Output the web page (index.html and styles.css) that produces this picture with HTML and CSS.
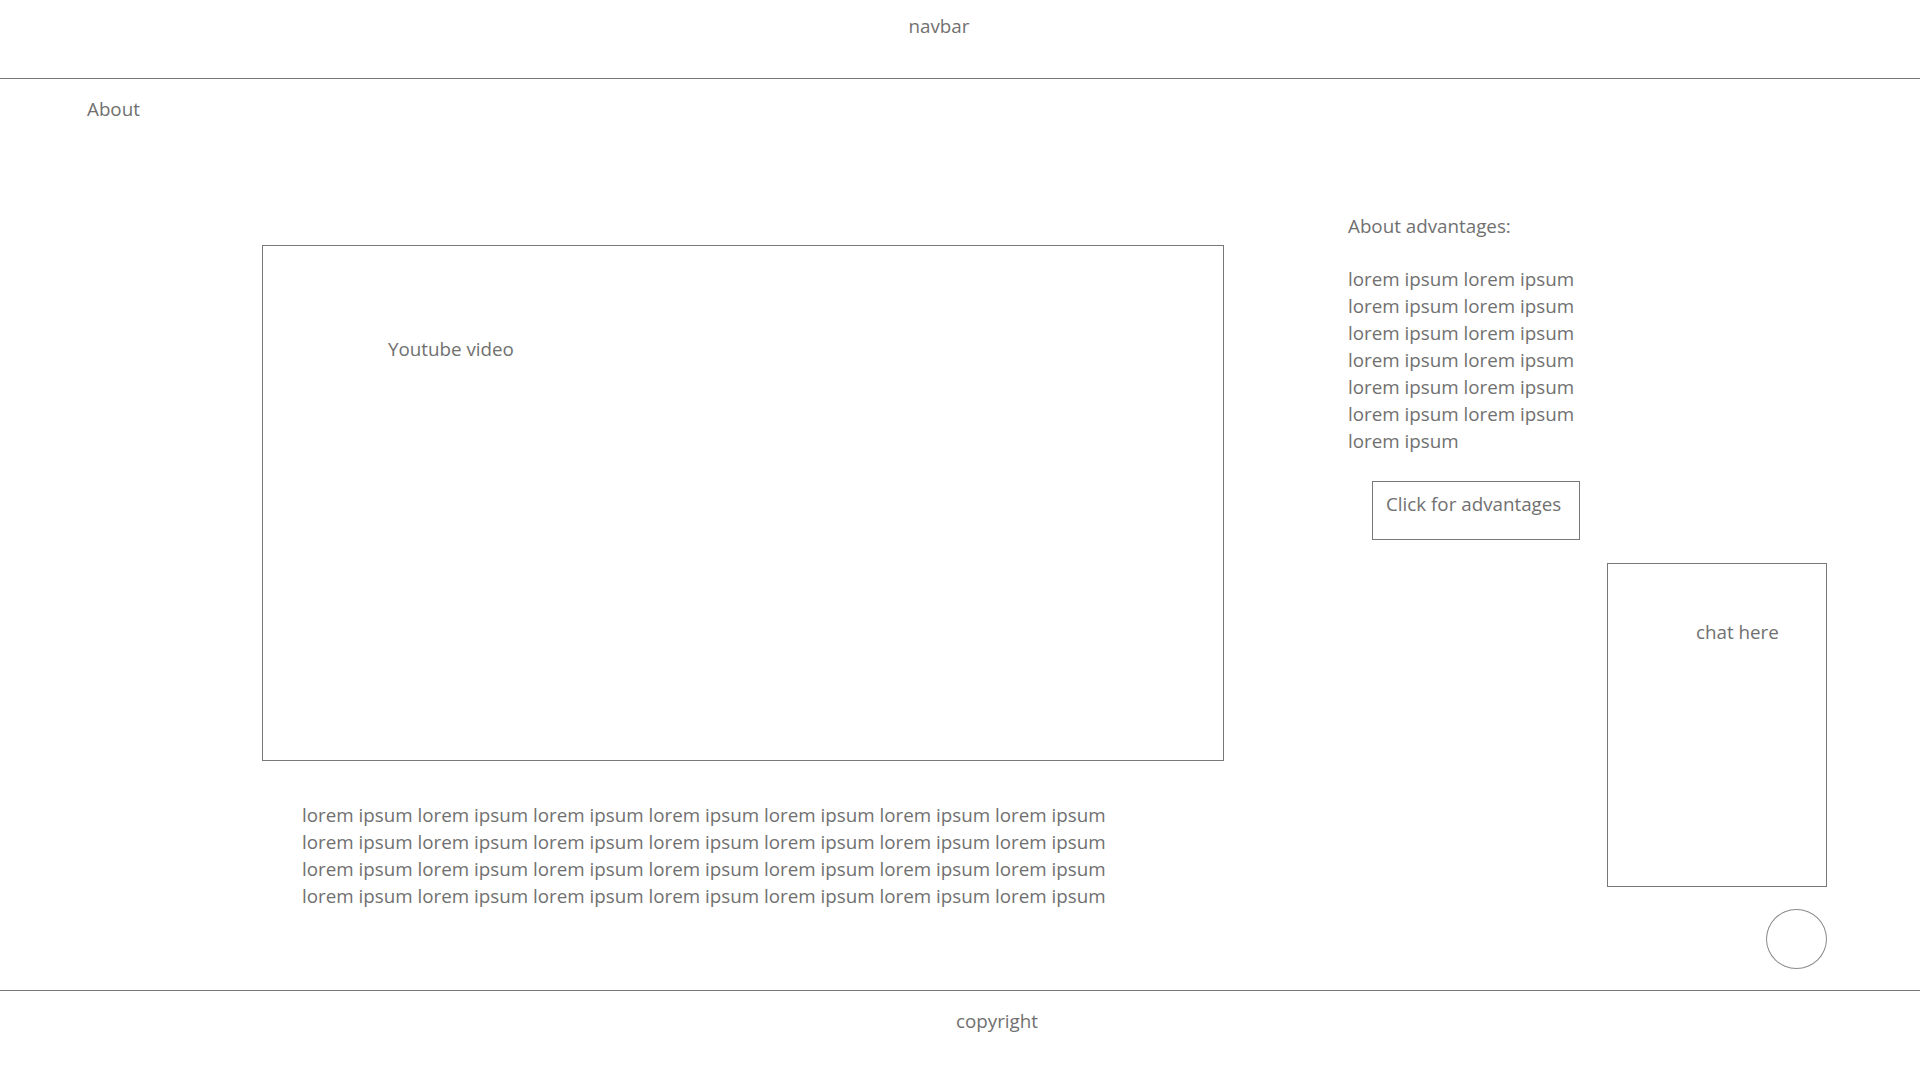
FILE: index.html
```html
<!DOCTYPE html>
<html lang="en">
<head>
<meta charset="utf-8">
<title>About</title>
<link rel="stylesheet" href="styles.css">
</head>
<body>
<header class="navbar"><span>navbar</span></header>
<main class="main">
  <h1 class="page-title">About</h1>
  <div class="content">
    <section class="video-col">
      <div class="video-box"><span class="video-label">Youtube video</span></div>
      <p class="description">lorem ipsum lorem ipsum lorem ipsum lorem ipsum lorem ipsum lorem ipsum lorem ipsum lorem ipsum lorem ipsum lorem ipsum lorem ipsum lorem ipsum lorem ipsum lorem ipsum lorem ipsum lorem ipsum lorem ipsum lorem ipsum lorem ipsum lorem ipsum lorem ipsum lorem ipsum lorem ipsum lorem ipsum lorem ipsum lorem ipsum lorem ipsum lorem ipsum</p>
    </section>
    <aside class="side-col">
      <p class="adv-title">About advantages:</p>
      <p class="adv-text">lorem ipsum lorem ipsum lorem ipsum lorem ipsum lorem ipsum lorem ipsum lorem ipsum lorem ipsum lorem ipsum lorem ipsum lorem ipsum lorem ipsum lorem ipsum</p>
      <button class="adv-button" type="button">Click for advantages</button>
      <div class="chat-box"><span class="chat-label">chat here</span></div>
      <div class="chat-toggle"></div>
    </aside>
  </div>
</main>
<footer class="footer"><span>copyright</span></footer>
</body>
</html>
```

FILE: styles.css
```css
* {
  box-sizing: border-box;
}

html, body {
  margin: 0;
  padding: 0;
  background: #ffffff;
}

body {
  font-family: "Open Sans", "Noto Sans", sans-serif;
  font-size: 18.8px;
  line-height: 27px;
  color: #707070;
  min-height: 100vh;
  display: flex;
  flex-direction: column;
}

.navbar {
  height: 79px;
  padding: 13px 42px 0 0;
  border-bottom: 1px solid #787878;
  display: flex;
  justify-content: center;
  align-items: flex-start;
}

.main {
  flex: 1;
  display: flex;
  flex-direction: column;
  padding-top: 17px;
}

.page-title {
  margin: 0;
  padding-left: 87px;
  font-size: 18.8px;
  font-weight: 400;
  line-height: 27px;
}

.content {
  display: flex;
  align-items: flex-start;
}

.video-col {
  margin-left: 262px;
  margin-top: 122px;
  width: 962px;
}

.video-box {
  width: 962px;
  height: 516px;
  border: 1px solid #787878;
  padding: 90px 0 0 125px;
}

.video-label {
  display: block;
}

.description {
  margin: 41px 0 0 40px;
  width: 840px;
}

.side-col {
  margin-left: 124px;
  margin-top: 90px;
  width: 480px;
  display: flex;
  flex-direction: column;
  align-items: flex-start;
}

.adv-title {
  margin: 0 0 26px 0;
}

.adv-text {
  margin: 0;
  width: 240px;
}

.adv-button {
  margin: 26px 0 0 24px;
  width: 208px;
  height: 59px;
  padding: 9px 0 0 13px;
  border: 1px solid #787878;
  background: #ffffff;
  font-family: inherit;
  font-size: 18.8px;
  line-height: 27px;
  color: #707070;
  text-align: left;
  display: flex;
  align-items: flex-start;
  cursor: pointer;
}

.chat-box {
  align-self: flex-end;
  margin-top: 23px;
  margin-right: 1px;
  width: 220px;
  height: 324px;
  border: 1px solid #787878;
  padding: 55px 0 0 88px;
}

.chat-label {
  display: block;
}

.chat-toggle {
  align-self: flex-end;
  margin-top: 22px;
  margin-right: 1px;
  width: 61px;
  height: 60px;
  border: 1px solid #8a8a8a;
  border-radius: 50%;
}

.footer {
  height: 90px;
  border-top: 1px solid #787878;
  padding: 17px 0 0 74px;
  display: flex;
  justify-content: center;
  align-items: flex-start;
}
```
